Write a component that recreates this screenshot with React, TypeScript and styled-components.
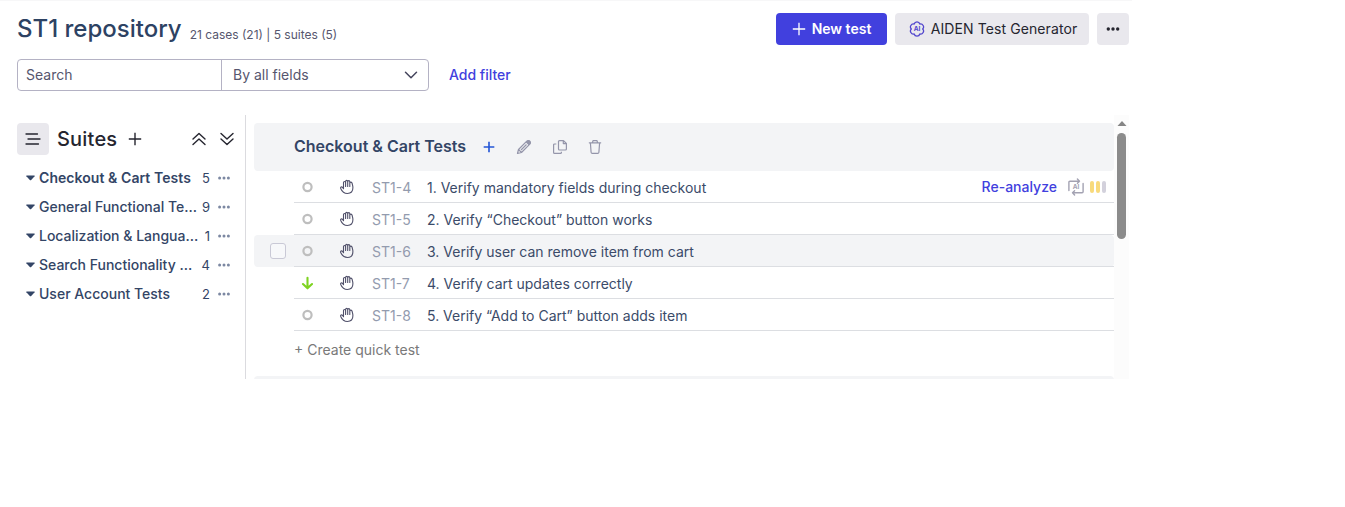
import React from "react";
import styled, { createGlobalStyle } from "styled-components";

const Global = createGlobalStyle`
  * { box-sizing: border-box; }
  body { margin: 0; background: #fff; font-family: Inter, "Liberation Sans", sans-serif; font-size: 14px; color: #2d4263; }
  button { font: inherit; border: 0; padding: 0; background: none; color: inherit; }
  svg { display: block; flex: none; }
`;

const Page = styled.div`
  width: 1132px;
  height: 507px;
  border-top: 1px solid #f7f7f8;
`;
const TopBar = styled.header`
  display: flex;
  align-items: center;
  height: 32px;
  margin: 12px 3px 0 17px;
`;
const Title = styled.h1`
  margin: 0;
  font-size: 24px;
  line-height: 32px;
  font-weight: 500;
  white-space: nowrap;
`;
const Totals = styled.span`
  margin: 11px 0 0 8px;
  font-size: 12px;
  line-height: 16px;
  color: #56566e;
  white-space: nowrap;
`;
const Actions = styled.div`
  display: flex;
  gap: 8px;
  margin-left: auto;
`;
const Button = styled.button<{ $primary?: boolean; $width: number }>`
  display: flex;
  align-items: center;
  justify-content: center;
  gap: 6px;
  width: ${(p) => p.$width}px;
  height: 32px;
  line-height: 32px;
  border-radius: 4px;
  background: ${(p) => (p.$primary ? "#4140de" : "#e9e8ed")};
  color: ${(p) => (p.$primary ? "#fff" : "#25252f")};
  font-weight: ${(p) => (p.$primary ? 600 : 400)};
  letter-spacing: ${(p) => (p.$primary ? 0 : "0.1px")};
  white-space: nowrap;
`;
const GeneratorButton = styled(Button)`
  padding-left: 2px;
`;
const FilterBar = styled.div`
  display: flex;
  align-items: center;
  margin: 14px 0 0 17px;
`;
const SearchGroup = styled.div`
  display: flex;
  width: 412px;
  height: 32px;
  border: 1px solid #b4b2c4;
  border-radius: 4px;
  color: #56566e;
  line-height: 30px;
`;
const SearchField = styled.div`
  width: 204px;
  padding-left: 8px;
  border-right: 1px solid #b4b2c4;
`;
const FieldSelect = styled.div`
  flex: 1;
  display: flex;
  align-items: center;
  justify-content: space-between;
  padding: 0 10px 0 11px;
`;
const LinkText = styled.span`
  color: #4140de;
  font-weight: 500;
  white-space: nowrap;
`;
const AddFilter = styled(LinkText)`
  margin-left: 20px;
  line-height: 32px;
`;
const Content = styled.main`
  display: flex;
  width: 1129px;
  height: 264px;
  margin-top: 24px;
`;
const Sidebar = styled.aside`
  width: 246px;
  border-right: 1px solid #dbdbdf;
  padding: 8px 0 0 17px;
`;
const SidebarHead = styled.div`
  display: flex;
  align-items: center;
  height: 32px;
  color: #25252f;
`;
const SidebarTitle = styled.h2`
  margin: 0 11px 0 8px;
  font-size: 20px;
  line-height: 32px;
  font-weight: 500;
  letter-spacing: 0.2px;
`;
const FoldButtons = styled.div`
  display: flex;
  gap: 12px;
  margin: 0 10px 0 auto;
`;
const SuiteList = styled.div`
  padding: 8px 0 0 9px;
`;
const SuiteRow = styled.div<{ $active?: boolean }>`
  display: flex;
  align-items: center;
  height: 29px;
  color: #334566;
  font-weight: ${(p) => (p.$active ? 600 : 500)};
  letter-spacing: ${(p) => (p.$active ? "0.06px" : 0)};
`;
const SuiteName = styled.span`
  flex: 1;
  margin-left: 4px;
  white-space: nowrap;
`;
const SuiteCount = styled.span`
  margin-right: 8px;
  font-size: 13px;
  font-weight: 400;
`;
const SuiteMenu = styled.span`
  margin-right: 15px;
  color: #7c88a2;
`;
const Cases = styled.section`
  flex: 1;
  padding: 8px 0 0 8px;
  overflow: hidden;
`;
const GroupHead = styled.div`
  display: flex;
  align-items: center;
  height: 48px;
  padding-left: 40px;
  border-radius: 4px;
  background: #f3f4f6;
  color: #9495aa;
`;
const GroupTitle = styled.h3`
  margin: 0 17px 0 0;
  padding-bottom: 2px;
  width: 172px;
  font-size: 16px;
  font-weight: 600;
  color: #334566;
  white-space: nowrap;
`;
const GroupTools = styled.div`
  display: flex;
  align-items: center;
  gap: 19.5px;
  margin-left: 21px;
`;
const CaseRow = styled.div<{ $hover?: boolean }>`
  display: flex;
  height: 32px;
  border-radius: 4px;
  background: ${(p) => (p.$hover ? "#f3f4f6" : "#fff")};
`;
const CheckCell = styled.div`
  width: 40px;
  padding: 8px 0 0 16px;
`;
const Checkbox = styled.div`
  width: 16px;
  height: 16px;
  border: 1px solid #c9c9d6;
  border-radius: 3px;
  background: #f7f8fa;
`;
const CaseBody = styled.div`
  flex: 1;
  display: flex;
  align-items: center;
  border-bottom: 1px solid #dcdee2;
`;
const PriorityCell = styled.div`
  width: 44.5px;
  padding-left: 7px;
`;
const HandCell = styled.div`
  width: 33.5px;
`;
const CaseId = styled.span`
  width: 55px;
  padding-top: 2px;
  color: #939bae;
`;
const CaseTitle = styled.span`
  flex: 1;
  padding-top: 2px;
  color: #3b4b69;
  white-space: nowrap;
`;
const Analysis = styled.div`
  display: flex;
  align-items: center;
  padding-right: 8px;
`;
const AnalyzeLink = styled(LinkText)`
  margin-right: 11px;
`;
const Level = styled.div`
  display: flex;
  gap: 2px;
  margin-left: 6px;
`;
const LevelBar = styled.i<{ $on?: boolean }>`
  width: 4px;
  height: 12px;
  border-radius: 2px;
  background: ${(p) => (p.$on ? "#f8da7c" : "#d3d1dc")};
`;
const QuickTest = styled.div`
  height: 45px;
  padding-left: 40px;
  line-height: 38px;
  color: #797979;
`;
const ScrollTrack = styled.div`
  display: flex;
  flex-direction: column;
  align-items: center;
  width: 15px;
  padding-top: 6px;
  background: #fcfcfc;
`;
const ScrollThumb = styled.div`
  width: 9px;
  height: 106px;
  margin-top: 7px;
  border-radius: 5px;
  background: #8b8b8b;
`;

const Plus = ({ size = 14, width = 1.5, color = "currentColor" }: { size?: number; width?: number; color?: string }) => (
  <svg width={size} height={size} viewBox="0 0 14 14" fill="none" stroke={color} strokeWidth={width}>
    <path d="M7 .8v12.4M.8 7h12.4" />
  </svg>
);
const Dots = ({ r = 1.7, gap = 4.7, width = 14 }: { r?: number; gap?: number; width?: number }) => (
  <svg width={width} height="6" viewBox={`0 0 ${width} 6`} fill="currentColor">
    {[-1, 0, 1].map((n) => <circle key={n} cx={width / 2 + n * gap} cy="3" r={r} />)}
  </svg>
);
const Gear = () => (
  <svg width="16" height="16" viewBox="0 0 16 16" fill="none" stroke="#5145cd" strokeWidth="1.3" strokeLinejoin="round">
    <path d="M13.7 8A2.97 2.97 0 0 0 10.85 3.05 2.97 2.97 0 0 0 5.15 3.05 2.97 2.97 0 0 0 2.3 8 2.97 2.97 0 0 0 5.15 12.95 2.97 2.97 0 0 0 10.85 12.95 2.97 2.97 0 0 0 13.7 8z" />
    <text x="8" y="10.3" textAnchor="middle" fontSize="6.4" fontWeight="700" letterSpacing="0" fill="#5145cd" stroke="none">AI</text>
  </svg>
);
const Chevron = () => (
  <svg width="14" height="10" viewBox="0 0 14 10" fill="none" stroke="#45455c" strokeWidth="1.5" strokeLinecap="round" strokeLinejoin="round">
    <path d="M1.5 2.2 7 7.7l5.5-5.5" />
  </svg>
);
const Lines = () => (
  <svg width="16" height="12" viewBox="0 0 16 12" fill="none" stroke="#25252f" strokeWidth="1.3" strokeLinecap="round">
    <path d="M1 1h11.5M3 6h12M1 11h12.5" />
  </svg>
);
const DoubleChevron = ({ down }: { down?: boolean }) => (
  <svg width="16" height="14" viewBox="0 0 16 14" fill="none" stroke="#25252f" strokeWidth="1.4" strokeLinecap="round" strokeLinejoin="round">
    <path d={down ? "M2 1.5 8 7l6-5.5M2 7l6 5.5L14 7" : "M2 7l6-5.5L14 7M2 12.5 8 7l6 5.5"} />
  </svg>
);
const Caret = () => (
  <svg width="9" height="6" viewBox="0 0 9 6" fill="#334566"><path d="M.7.5h7.6q.7.1.3.7L5.2 5q-.7.7-1.4 0L.4 1.2Q0 .6.7.5z" /></svg>
);
const Hand = () => (
  <svg width="16" height="16" viewBox="0 0 16 16" fill="none" stroke="#50506a" strokeWidth="1.1" strokeLinecap="round" strokeLinejoin="round">
    <path d="M4.5 9.7V3.6a1.05 1.05 0 0 1 2.1 0V7.5M6.6 7.5V2.4a1.05 1.05 0 0 1 2.1 0V7.5M8.7 7.5V2.7a1.05 1.05 0 0 1 2.1 0V7.5M10.8 7.5V4.2a1.1 1.1 0 0 1 2.2 0c.5 1.5.9 3 .9 4.6 0 3.4-2.2 5.7-5.5 5.7-3.5 0-5.4-2-6.7-5-.5-1.3 1-2.1 1.8-1.1l1 1.3" />
  </svg>
);
const Pencil = () => (
  <svg width="16" height="16" viewBox="0 0 16 16" fill="none" stroke="#9495aa" strokeWidth="1.2" strokeLinejoin="round">
    <path d="m1.5 14.5 1-4L10.8 2.2a1.9 1.9 0 0 1 3 3L5.5 13.5zM2.5 10.5l3 3M5 11l5.5-5.5" />
    <path d="m9.7 3.3 1.4-1.4c1.9-1.7 4.7 1.1 3 3l-1.4 1.4z" fill="#9495aa" stroke="none" />
  </svg>
);
const Copy = () => (
  <svg width="16" height="16" viewBox="0 0 16 16" fill="none" stroke="#9495aa" strokeWidth="1.2" strokeLinejoin="round">
    <path d="M7.5 1.6h4L14.4 4.5V10q0 1-1 1H7.5q-1 0-1-1V2.6q0-1 1-1zM11.3 1.6v3h3M4.3 5H2.6q-1 0-1 1v7.4q0 1 1 1h5.8q1 0 1-1v-.6" />
  </svg>
);
const Trash = () => (
  <svg width="16" height="16" viewBox="0 0 16 16" fill="none" stroke="#9495aa" strokeWidth="1.2" strokeLinecap="round" strokeLinejoin="round">
    <path d="M2.3 3.8h11.4M5.5 3.5l.5-1.8h4l.5 1.8M3.4 4l.7 9.3q.1 1.1 1.2 1.1h5.4q1.1 0 1.2-1.1L12.6 4" />
  </svg>
);
const Normal = () => (
  <svg width="12" height="14" viewBox="0 0 12 14"><circle cx="6.5" cy="7" r="4.1" fill="none" stroke="#bebebe" strokeWidth="2.2" /></svg>
);
const Low = () => (
  <svg width="12" height="14" viewBox="0 0 12 14" fill="none" stroke="#7ed321" strokeWidth="2.1" strokeLinecap="round" strokeLinejoin="round">
    <path d="M6.5 1.8v10.2M2 8l4.5 4.3L11 8" />
  </svg>
);
const AiCycle = () => (
  <svg width="16" height="18" viewBox="0 0 16 18" fill="none" stroke="#a3a2b2" strokeWidth="1.4" strokeLinecap="round" strokeLinejoin="round">
    <path d="M.9 12.5V4.2q0-1 1-1h9.6M9.4 1l2.1 2.2L9.4 5.2M15.1 5.5v8.2q0 1-1 1H4.5M6.6 12.7 4.5 14.7l2.1 2.2" />
    <text x="8" y="11.3" textAnchor="middle" fontSize="6.4" fontWeight="700" fill="#a3a2b2" stroke="none">AI</text>
  </svg>
);

const suites = [
  ["Checkout & Cart Tests", 5],
  ["General Functional Te...", 9],
  ["Localization & Langua...", 1],
  ["Search Functionality ...", 4],
  ["User Account Tests", 2],
] as const;

const cases = [
  { id: "ST1-4", title: "1. Verify mandatory fields during checkout", analysis: true },
  { id: "ST1-5", title: "2. Verify “Checkout” button works" },
  { id: "ST1-6", title: "3. Verify user can remove item from cart", hover: true },
  { id: "ST1-7", title: "4. Verify cart updates correctly", low: true },
  { id: "ST1-8", title: "5. Verify “Add to Cart” button adds item" },
];

export default function App() {
  return (
    <Page>
      <Global />
      <TopBar>
        <Title>ST1 repository</Title>
        <Totals>21 cases (21) | 5 suites (5)</Totals>
        <Actions>
          <Button $primary $width={111}><Plus width={1.3} />New test</Button>
          <GeneratorButton $width={194}><Gear />AIDEN Test Generator</GeneratorButton>
          <Button $width={32}><Dots /></Button>
        </Actions>
      </TopBar>
      <FilterBar>
        <SearchGroup>
          <SearchField>Search</SearchField>
          <FieldSelect>By all fields<Chevron /></FieldSelect>
        </SearchGroup>
        <AddFilter>Add filter</AddFilter>
      </FilterBar>
      <Content>
        <Sidebar>
          <SidebarHead>
            <Button $width={32}><Lines /></Button>
            <SidebarTitle>Suites</SidebarTitle>
            <Plus width={1.4} />
            <FoldButtons><DoubleChevron /><DoubleChevron down /></FoldButtons>
          </SidebarHead>
          <SuiteList>
            {suites.map(([name, count], i) => (
              <SuiteRow key={name} $active={i === 0}>
                <Caret />
                <SuiteName>{name}</SuiteName>
                <SuiteCount>{count}</SuiteCount>
                <SuiteMenu><Dots r={1.5} gap={4.4} width={12} /></SuiteMenu>
              </SuiteRow>
            ))}
          </SuiteList>
        </Sidebar>
        <Cases>
          <GroupHead>
            <GroupTitle>Checkout & Cart Tests</GroupTitle>
            <Plus size={12} width={1.9} color="#2456d6" />
            <GroupTools><Pencil /><Copy /><Trash /></GroupTools>
          </GroupHead>
          {cases.map((c) => (
            <CaseRow key={c.id} $hover={c.hover}>
              <CheckCell>{c.hover && <Checkbox />}</CheckCell>
              <CaseBody>
                <PriorityCell>{c.low ? <Low /> : <Normal />}</PriorityCell>
                <HandCell><Hand /></HandCell>
                <CaseId>{c.id}</CaseId>
                <CaseTitle>{c.title}</CaseTitle>
                {c.analysis && (
                  <Analysis>
                    <AnalyzeLink>Re-analyze</AnalyzeLink>
                    <AiCycle />
                    <Level><LevelBar $on /><LevelBar $on /><LevelBar /></Level>
                  </Analysis>
                )}
              </CaseBody>
            </CaseRow>
          ))}
          <QuickTest>+ Create quick test</QuickTest>
          <GroupHead />
        </Cases>
        <ScrollTrack>
          <svg width="10" height="5" viewBox="0 0 10 5" fill="#858585"><path d="M5 0l4.5 5H.5z" /></svg>
          <ScrollThumb />
        </ScrollTrack>
      </Content>
    </Page>
  );
}
